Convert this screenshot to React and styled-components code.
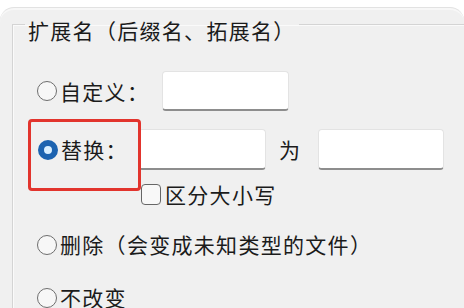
import React from 'react'
import styled, { createGlobalStyle } from 'styled-components'

const GlobalStyle = createGlobalStyle`
  html, body {
    margin: 0;
    padding: 0;
    background: #ffffff;
    overflow: hidden;
  }
  body {
    font-family: "Noto Sans CJK SC", "Noto Sans", sans-serif;
    color: #1b1b1b;
  }
`

const Page = styled.div`
  width: 464px;
  height: 308px;
  padding-top: 7px;
  box-sizing: border-box;
  overflow: hidden;
`

const Panel = styled.div`
  height: 320px;
  background: #f0f0f0;
  border-radius: 14px 14px 0 0;
  border-top: 1px solid #e2e2e2;
  box-shadow: inset 0 2px 0 #f7f7f7;
`

const Group = styled.fieldset`
  margin: -1px 0 0 12px;
  padding: 0 0 0 12px;
  border: 1px solid #d4d4d4;
  border-right: none;
  border-bottom: none;
  box-shadow: inset 1px 1px 0 #fafafa;
  height: 330px;
  box-sizing: border-box;
`

const Title = styled.legend`
  padding: 12px 3px 0;
  font-size: 21px;
  line-height: 22px;
  letter-spacing: 1.3px;
  color: #1b1b1b;
`

const Row = styled.div`
  position: relative;
  display: flex;
  align-items: center;
  height: ${(p) => p.$h || 25}px;
  margin-top: ${(p) => p.$mt || 0}px;
  padding-left: ${(p) => p.$pl || 12}px;
`

const Radio = styled.span`
  width: 20px;
  height: 20px;
  box-sizing: border-box;
  border-radius: 50%;
  flex-shrink: 0;
  border: ${(p) => (p.$checked ? '6.5px solid #1c63b0' : '1.5px solid #6e6e6e')};
  background: ${(p) => (p.$checked ? '#d8eeff' : '#f7f7f7')};
  margin-right: 3px;
`

const Label = styled.span`
  font-size: 21px;
  line-height: 1;
  white-space: nowrap;
  letter-spacing: 1.3px;
  margin-left: ${(p) => p.$ml || 0}px;
`

const Input = styled.div`
  width: ${(p) => p.$w}px;
  height: ${(p) => p.$h || 40}px;
  margin-left: ${(p) => p.$ml || 0}px;
  box-sizing: border-box;
  background: #ffffff;
  border: 1px solid #e3e3e3;
  border-bottom: 2px solid #8d8d8d;
  border-radius: 4px;
  flex-shrink: 0;
`

const Box = styled.span`
  width: 20px;
  height: 21px;
  box-sizing: border-box;
  border: 1.5px solid #666;
  border-radius: 4px;
  background: #f8f8f8;
  margin-right: 4px;
  flex-shrink: 0;
`

const Highlight = styled.div`
  position: absolute;
  left: 3px;
  top: -10px;
  width: 113px;
  height: 72px;
  box-sizing: border-box;
  border: 3px solid #e2342d;
  border-radius: 4px;
  pointer-events: none;
`

const App = () => {
  return (
    <Page>
      <GlobalStyle />
      <Panel>
        <Group>
          <Title>扩展名（后缀名、拓展名）</Title>
          <Row $h={40} $mt={30}>
            <Radio />
            <Label>自定义：</Label>
            <Input $w={127} $ml={13} />
          </Row>
          <Row $h={41} $mt={18} $pl={13}>
            <Radio $checked />
            <Label>替换：</Label>
            <Input $w={128} $h={41} $ml={10} />
            <Label $ml={13}>为</Label>
            <Input $w={126} $h={41} $ml={17} />
            <Highlight />
          </Row>
          <Row $mt={12} $pl={116}>
            <Box />
            <Label>区分大小写</Label>
          </Row>
          <Row $mt={25}>
            <Radio />
            <Label>删除（会变成未知类型的文件）</Label>
          </Row>
          <Row $mt={28}>
            <Radio />
            <Label>不改变</Label>
          </Row>
        </Group>
      </Panel>
    </Page>
  )
}

export default App
